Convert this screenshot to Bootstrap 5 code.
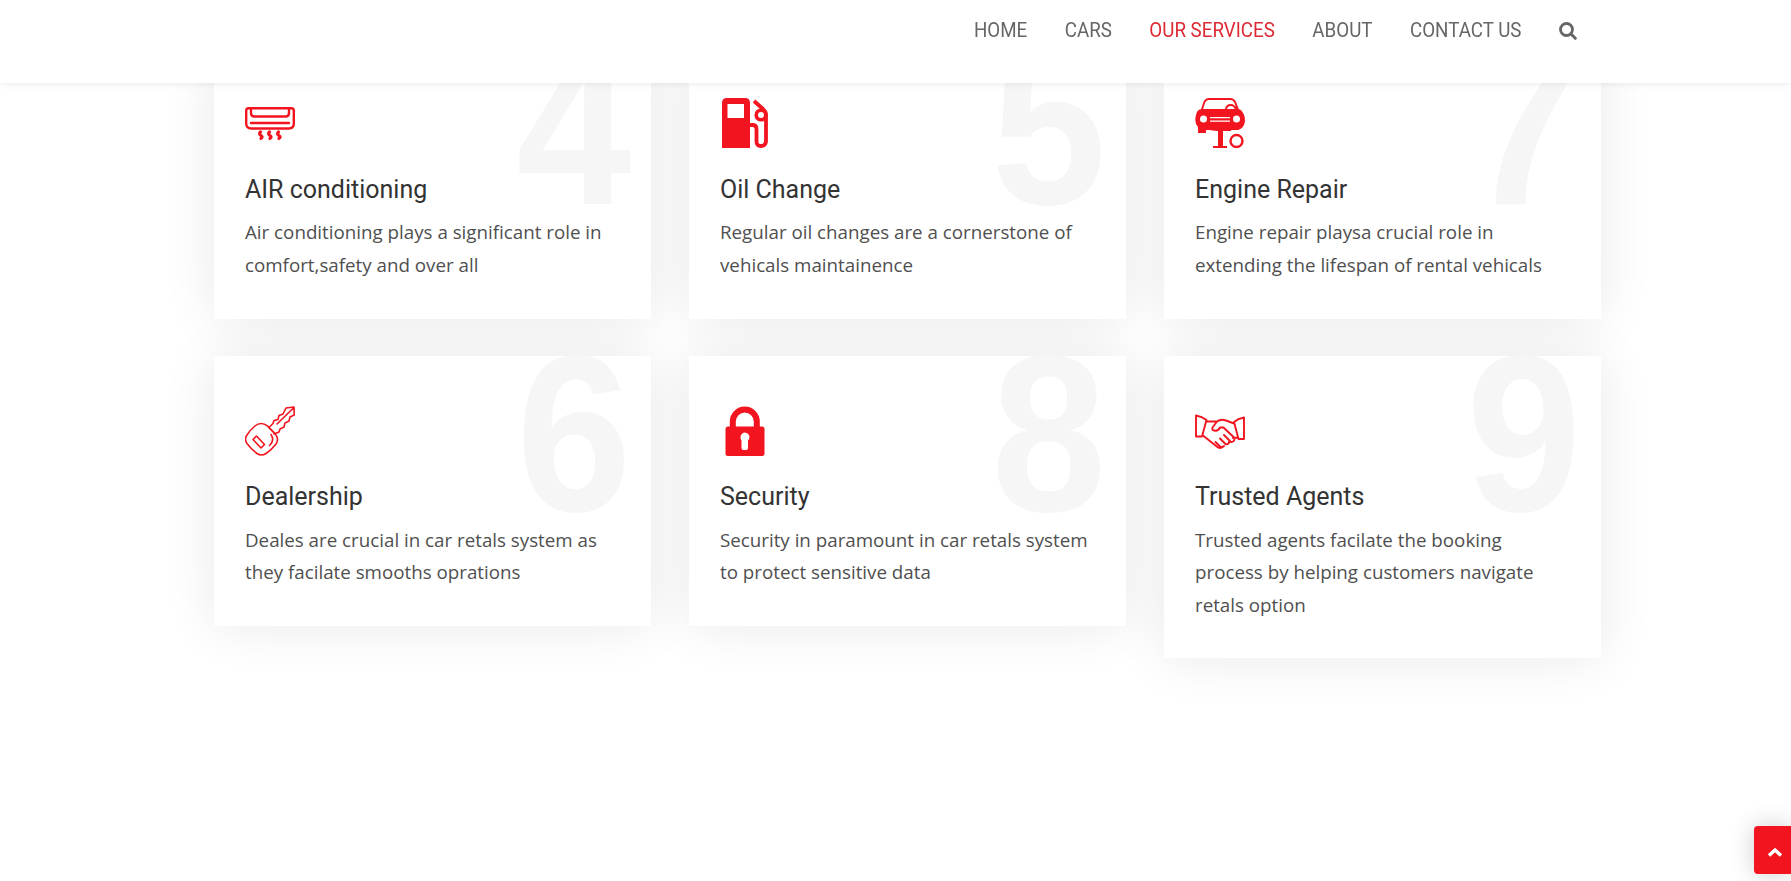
<!DOCTYPE html>
<html lang="en">
<head>
<meta charset="utf-8">
<meta name="viewport" content="width=device-width, initial-scale=1">
<title>Our Services</title>
<link href="https://cdn.jsdelivr.net/npm/bootstrap@5.3.0/dist/css/bootstrap.min.css" rel="stylesheet">
<style>
body{font-family:"Open Sans",sans-serif;font-size:18.75px;line-height:32.5px;color:#4f4f4f;background:#fff;overflow:hidden;height:881px}
.topbar{height:83px;background:#fff;box-shadow:0 0 8px rgba(0,0,0,.1);z-index:10}
.wrap{width:1387.5px;margin-left:214px}
.menu{gap:37.5px;padding-right:24.5px;height:61px;font-family:Roboto,sans-serif;font-size:18.75px;line-height:22px}
.menu a{color:#666;text-decoration:none}
.menu a:not(:last-child){transform:scaleY(1.08)}
.menu a.on{color:#dd2a35}
.services{padding-top:48.6px;gap:37.4px 38px;display:grid;grid-template-columns:repeat(3,437px);align-items:start;isolation:isolate}
.service{background:#fff;padding:49.8px 31px 37.2px}
.service::before{content:"";position:absolute;inset:0;z-index:-1;box-shadow:0 0 50px rgba(0,0,0,.09)}
.service>*{position:relative}
.service .num{position:absolute;top:-30px;right:16.5px;font:bold 218.75px/1 "Liberation Sans",Arial,sans-serif;color:#f6f6f6;transform:scale(.945,1.015);transform-origin:50% 85%}
.service svg{display:block;width:50px;height:50px;color:#f2151f}
.service h4{font-family:Roboto,sans-serif;font-weight:400;font-size:25px;line-height:30px;color:#333;margin:26.2px 0 11.8px}
.service p{margin:0}
.totop{right:0;bottom:7px;width:37px;height:48px;padding:3px 0 0 5px;background:#f2151f;border-radius:4px 0 0 4px;box-shadow:0 0 25px rgba(0,0,0,.2)}
</style>
</head>
<body>
<header class="topbar position-fixed top-0 start-0 w-100">
<nav class="wrap menu d-flex justify-content-end align-items-center">
<a href="#">HOME</a><a href="#">CARS</a><a href="#" class="on">OUR SERVICES</a><a href="#">ABOUT</a><a href="#">CONTACT US</a>
<a href="#" aria-label="Search"><svg class="d-block" width="18" height="18" viewBox="0 0 18 18" fill="none" stroke="currentColor"><circle cx="7.500" cy="7.500" r="6" stroke-width="2.800"/><path d="M12 12l4.300 4.300" stroke-width="3" stroke-linecap="round"/></svg></a>
</nav>
</header>
<main class="wrap services">
<article class="service position-relative"><span class="num">4</span>
<svg viewBox="0 0 50 50" fill="none" stroke="currentColor" stroke-width="2.400" stroke-linecap="round"><path d="M3.500 10.200h43q2.300 0 2.300 2.300v13q0 5-5 5H6.200q-5 0-5-5v-13q0-2.300 2.300-2.300z"/><path d="M6 11v4q0 3.500 3.500 3.500h31q3.500 0 3.500-3.500v-4M6 25h38"/><path d="M15.500 34q-2 2 .4 3.500t0 3M24.500 34q-2 2 .4 3.500t0 3M33.500 34q-2 2 .4 3.500t0 3" stroke-width="3.200"/></svg>
<h4>AIR conditioning</h4><p>Air conditioning plays a significant role in comfort,safety and over all</p></article>
<article class="service position-relative"><span class="num">5</span>
<svg viewBox="0 0 50 50"><path fill="currentColor" fill-rule="evenodd" d="M2 50V5q0-5 5-5h18q5 0 5 5v45zM7.500 6v14H24V6z"/><path d="M29 27h3.500q4 0 4 4v12.500q0 4.500 4.500 4.500t5-4.500V16q0-2-3-5l-9-8" fill="none" stroke="currentColor" stroke-width="3.800"/><circle cx="41" cy="17" r="4.800" fill="#fff" stroke="currentColor" stroke-width="3.600"/></svg>
<h4>Oil Change</h4><p>Regular oil changes are a cornerstone of vehicals maintainence</p></article>
<article class="service position-relative"><span class="num">7</span>
<svg viewBox="0 0 50 50"><path d="M6.500 13l2.500-8q1.500-4 5-4h21q4 0 5.500 4L43.500 13M31 12q0-5 5-5 3 0 5 4" fill="none" stroke="currentColor" stroke-width="1.900"/><path fill="currentColor" d="M7 11h36q3 0 5 4c4 6 2 17-7 17h-5v1H22l-8-1h-3v3H3v-6q-4-4-2-12 1-6 6-6zM23 32h5v16h4v2H18v-2h5z"/><g fill="#fff"><circle cx="8.500" cy="21" r="3.500"/><circle cx="41.500" cy="21" r="3.500"/><path d="M15 19h20v1.300H15zM15 22.500h20v1.300H15z"/></g><circle cx="41.500" cy="43" r="6" fill="#fff" stroke="currentColor" stroke-width="2.400"/></svg>
<h4>Engine Repair</h4><p>Engine repair playsa crucial role in extending the lifespan of rental vehicals</p></article>
<article class="service position-relative"><span class="num">6</span>
<svg viewBox="0 0 50 50" fill="none" stroke="currentColor" stroke-width="1.600" stroke-linejoin="round" stroke-linecap="round"><path d="M10 20q6-5 12.500 0l8.500 9q3 4.500 0 9-5 6.500-10 9.500-4.500 3-9 0-6-4.500-10-10-3-4.500 0-8.500 3-5 8-9z"/><path d="M11.500 30l-3.500 3.500 8 8.500 3.500-3.500zM26 28.500q4 6-1.500 11M24 21.500l5 5M24 21.500l4-4 1-3 4-1 1-4 4-1.500 3-6 8-1 .2 8-4.200 2-1 4-4 2-1 4-4 2-1 3-5 2M32 18L49 1.500"/></svg>
<h4>Dealership</h4><p>Deales are crucial in car retals system as they facilate smooths oprations</p></article>
<article class="service position-relative"><span class="num">8</span>
<svg viewBox="0 0 50 50"><path d="M12.800 23v-7.500a12 12 0 0 1 24 0V23" fill="none" stroke="currentColor" stroke-width="6"/><rect x="5.500" y="20.500" width="39" height="29.500" rx="2.500" fill="currentColor"/><path d="M20.500 31.500a4.500 4.500 0 1 1 7.500 3V42q0 2-2 2h-2.500q-2 0-2-2v-7.500q-1-1-1-3z" fill="#fff"/></svg>
<h4>Security</h4><p>Security in paramount in car retals system to protect sensitive data</p></article>
<article class="service position-relative"><span class="num">9</span>
<svg viewBox="0 0 50 50" fill="none" stroke="currentColor" stroke-width="1.900" stroke-linejoin="round" stroke-linecap="round"><path d="M1 9.500q6 1 10.500 4.500L7 30.500H1zM49 11.500q-6 1-10 4.500l4.500 17H49zM12 15.500h9M8 29.500l15 12q3 1.500 5-1M39 17.500l-8-3q-5-2-9 1l-4.500 6q-1 3 2 3 3.500 1 5.500-3h3.500l9.500 9q3 3 0 5-2 1-4 0M42.500 31.500L38 32M20.500 36l4.500 4.500q2 1.500 4-.5M25 32.500l5.500 5.500q3 1 3.500-2M29 29l6 6"/></svg>
<h4>Trusted Agents</h4><p>Trusted agents facilate the booking process by helping customers navigate retals option</p></article>
</main>
<a href="#" class="totop position-fixed d-flex align-items-center justify-content-center" aria-label="Back to top"><svg width="16" height="10" viewBox="0 0 16 10" fill="none" stroke="#fff" stroke-width="3.500"><path d="M2 8.500l6-5.500 6 5.500"/></svg></a>
<script src="https://cdn.jsdelivr.net/npm/bootstrap@5.3.0/dist/js/bootstrap.bundle.min.js"></script>
</body>
</html>
